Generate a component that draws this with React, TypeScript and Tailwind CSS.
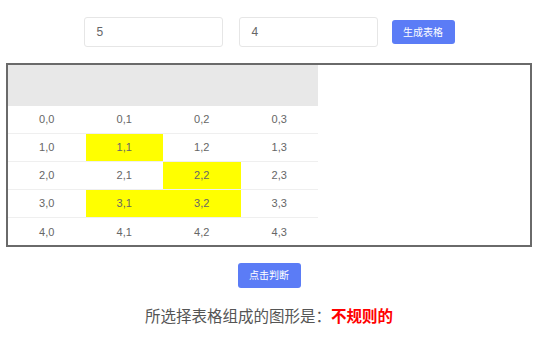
import React from "react";

const rows = 5;
const cols = 4;
const selected = new Set(["1,1", "2,2", "3,1", "3,2"]);

export default function App() {
  return (
    <div className="w-[538px] h-[338px] bg-white overflow-hidden" style={{ fontFamily: '"Liberation Sans", Arial, "Noto Sans CJK SC", sans-serif' }}>
      <div className="flex justify-center items-center pt-[17px]">
        <div className="w-[139px] h-[30px] border border-[#e6e6e6] rounded-[3px] flex items-center pl-[12px] text-[12px] text-[#666]">5</div>
        <div className="w-[139px] h-[30px] border border-[#e6e6e6] rounded-[3px] flex items-center pl-[12px] text-[12px] text-[#666] ml-[16px]">4</div>
        <button className="w-[63px] h-[24px] bg-[#5b7cf6] rounded-[3px] text-white text-[10px] ml-[14px]">生成表格</button>
      </div>
      <div className="mx-[6px] mt-[16px] h-[184px] border-2 border-[#6a6a6a] p-0 box-border">
        <div className="w-[310px] h-[41px] bg-[#e8e8e8]" />
        <div className="w-[310px]">
          {Array.from({ length: rows }).map((_, r) => (
            <div key={r} className={`grid grid-cols-4 h-[28px] ${r < rows - 1 ? "border-b border-[#efefef]" : ""}`}>
              {Array.from({ length: cols }).map((_, c) => {
                const k = `${r},${c}`;
                return (
                  <div key={c} className={`flex items-center justify-center text-[11px] text-[#666] ${selected.has(k) ? "bg-[#ffff00]" : ""}`}>
                    {k}
                  </div>
                );
              })}
            </div>
          ))}
        </div>
      </div>
      <div className="flex justify-center mt-[16px]">
        <button className="w-[63px] h-[25px] bg-[#5b7cf6] rounded-[3px] text-white text-[10px]">点击判断</button>
      </div>
      <div className="flex justify-center mt-[19px] text-[15.5px] leading-[20px]">
        <span className="text-[#555]">所选择表格组成的图形是：</span>
        <span className="text-[#ff0000] font-bold">不规则的</span>
      </div>
    </div>
  );
}
